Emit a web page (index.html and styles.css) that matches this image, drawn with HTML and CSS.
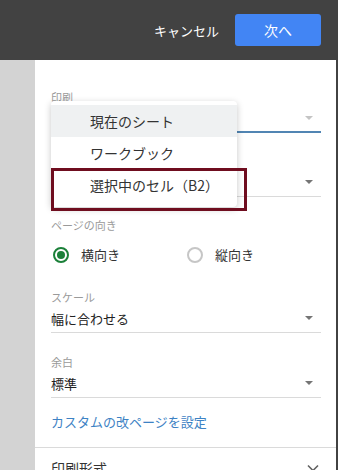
FILE: index.html
```html
<!DOCTYPE html>
<html lang="ja">

<head>
    <meta charset="UTF-8">
    <title>印刷設定</title>
    <link rel="stylesheet" href="styles.css">
</head>

<body>
    <!-- 上部バー -->
    <div class="topbar">
        <button class="cancel-button">キャンセル</button>
        <button class="next-button">次へ</button>
    </div>

    <div class="main">
        <div class="side"></div>

        <div class="panel">
            <div class="panel-body">
                <div class="field">
                    <div class="field-label">印刷</div>
                    <div class="field-select focused">
                        <span class="field-value"></span>
                        <span class="arrow light"></span>
                    </div>
                </div>

                <!-- メニューの下に隠れている項目 -->
                <div class="field">
                    <div class="field-label"></div>
                    <div class="field-select">
                        <span class="field-value"></span>
                        <span class="arrow"></span>
                    </div>
                </div>

                <div class="field">
                    <div class="field-label">ページの向き</div>
                    <div class="radio-row">
                        <label class="radio-option">
                            <span class="radio checked"></span>
                            <span>横向き</span>
                        </label>
                        <label class="radio-option">
                            <span class="radio"></span>
                            <span>縦向き</span>
                        </label>
                    </div>
                </div>

                <div class="field">
                    <div class="field-label">スケール</div>
                    <div class="field-select">
                        <span class="field-value">幅に合わせる</span>
                        <span class="arrow"></span>
                    </div>
                </div>

                <div class="field wide">
                    <div class="field-label">余白</div>
                    <div class="field-select">
                        <span class="field-value">標準</span>
                        <span class="arrow"></span>
                    </div>
                </div>

                <a class="link" href="#">カスタムの改ページを設定</a>

                <!-- 開いているドロップダウン -->
                <div class="menu">
                    <div class="menu-item active">現在のシート</div>
                    <div class="menu-item">ワークブック</div>
                    <div class="menu-item">選択中のセル（B2）</div>
                </div>
                <!-- 注目枠 -->
                <div class="highlight-box"></div>
            </div>

            <div class="section-row">
                <span>印刷形式</span>
                <svg class="chevron" width="12" height="8" viewBox="0 0 12 8">
                    <path d="M1 1.5 L6 6.5 L11 1.5" fill="none" stroke="#616161" stroke-width="1.6" />
                </svg>
            </div>
        </div>
    </div>
</body>

</html>
```

FILE: styles.css
```css
/* 基本設定 */
* {
    box-sizing: border-box;
    margin: 0;
    padding: 0;
}

body {
    font-family: 'Noto Sans CJK JP', 'Noto Sans', sans-serif;
    width: 338px;
    height: 470px;
    overflow: hidden;
    background-color: #424242;
    color: #222;
}

.topbar {
    height: 60px;
    background-color: #424242;
    display: flex;
    justify-content: flex-end;
    align-items: center;
    padding-right: 17px;
    gap: 16px;
}

.cancel-button {
    background: none;
    border: none;
    color: #fff;
    font-family: inherit;
    font-size: 13px;
    cursor: pointer;
}

.next-button {
    width: 86px;
    height: 32px;
    background-color: #4285f4;
    color: #fff;
    border: none;
    border-radius: 3px;
    font-family: inherit;
    font-size: 14px;
    cursor: pointer;
}

.main {
    display: flex;
    height: 410px;
}

.side {
    width: 37px;
    background-color: #d3d3d3;
}

.panel {
    flex: 1;
    background-color: #fff;
    margin-right: 2px;
}

.panel-body {
    position: relative;
    padding: 30px 15px 0 16px;
}

.field + .field {
    margin-top: 21px;
}

.field.wide {
    margin-top: 22px;
}

.field-label {
    height: 14px;
    font-size: 11px;
    line-height: 14px;
    color: #9a9a9a;
}

.field-select {
    height: 29px;
    display: flex;
    align-items: center;
    justify-content: space-between;
    border-bottom: 1px solid #dadada;
    padding-right: 8px;
}

.field-select.focused {
    border-bottom: 2px solid #5185b3;
}

.field-value {
    font-size: 13px;
    color: #222;
}

.arrow {
    width: 0;
    height: 0;
    border-left: 4px solid transparent;
    border-right: 4px solid transparent;
    border-top: 4px solid #757575;
}

.arrow.light {
    border-top-color: #c4c4c4;
}

.radio-row {
    display: flex;
    align-items: center;
    height: 29px;
    margin-top: 8px;
    padding-left: 2px;
}

.radio-option {
    width: 134px;
    display: flex;
    align-items: center;
    gap: 12px;
    font-size: 13px;
    color: #333;
}

.radio {
    width: 16px;
    height: 16px;
    border-radius: 50%;
    border: 2px solid #c6c6c6;
    display: flex;
    justify-content: center;
    align-items: center;
}

.radio.checked {
    border-color: #1b8039;
}

.radio.checked::after {
    content: '';
    width: 8px;
    height: 8px;
    border-radius: 50%;
    background-color: #1b8039;
}

.link {
    display: block;
    margin-top: 15px;
    font-size: 13px;
    line-height: 18px;
    color: #3d82c4;
    text-decoration: none;
}

.section-row {
    margin-top: 16px;
    border-top: 1px solid #dadada;
    padding: 10px 17px 0 16px;
    display: flex;
    justify-content: space-between;
    align-items: center;
    font-size: 14px;
    color: #333;
}

/* ドロップダウン */
.menu {
    position: absolute;
    top: 41px;
    left: 16px;
    width: 186px;
    padding: 4px 0 6px;
    background-color: #fff;
    border-radius: 4px;
    box-shadow: 0 2px 7px rgba(0, 0, 0, 0.22);
}

.menu-item {
    height: 32px;
    display: flex;
    align-items: center;
    padding-left: 39px;
    font-size: 14px;
    color: #333;
}

.menu-item.active {
    background-color: #eff1f2;
}

.highlight-box {
    position: absolute;
    top: 108px;
    left: 16px;
    width: 196px;
    height: 43px;
    border: 3px solid #6f0d1f;
}
```
